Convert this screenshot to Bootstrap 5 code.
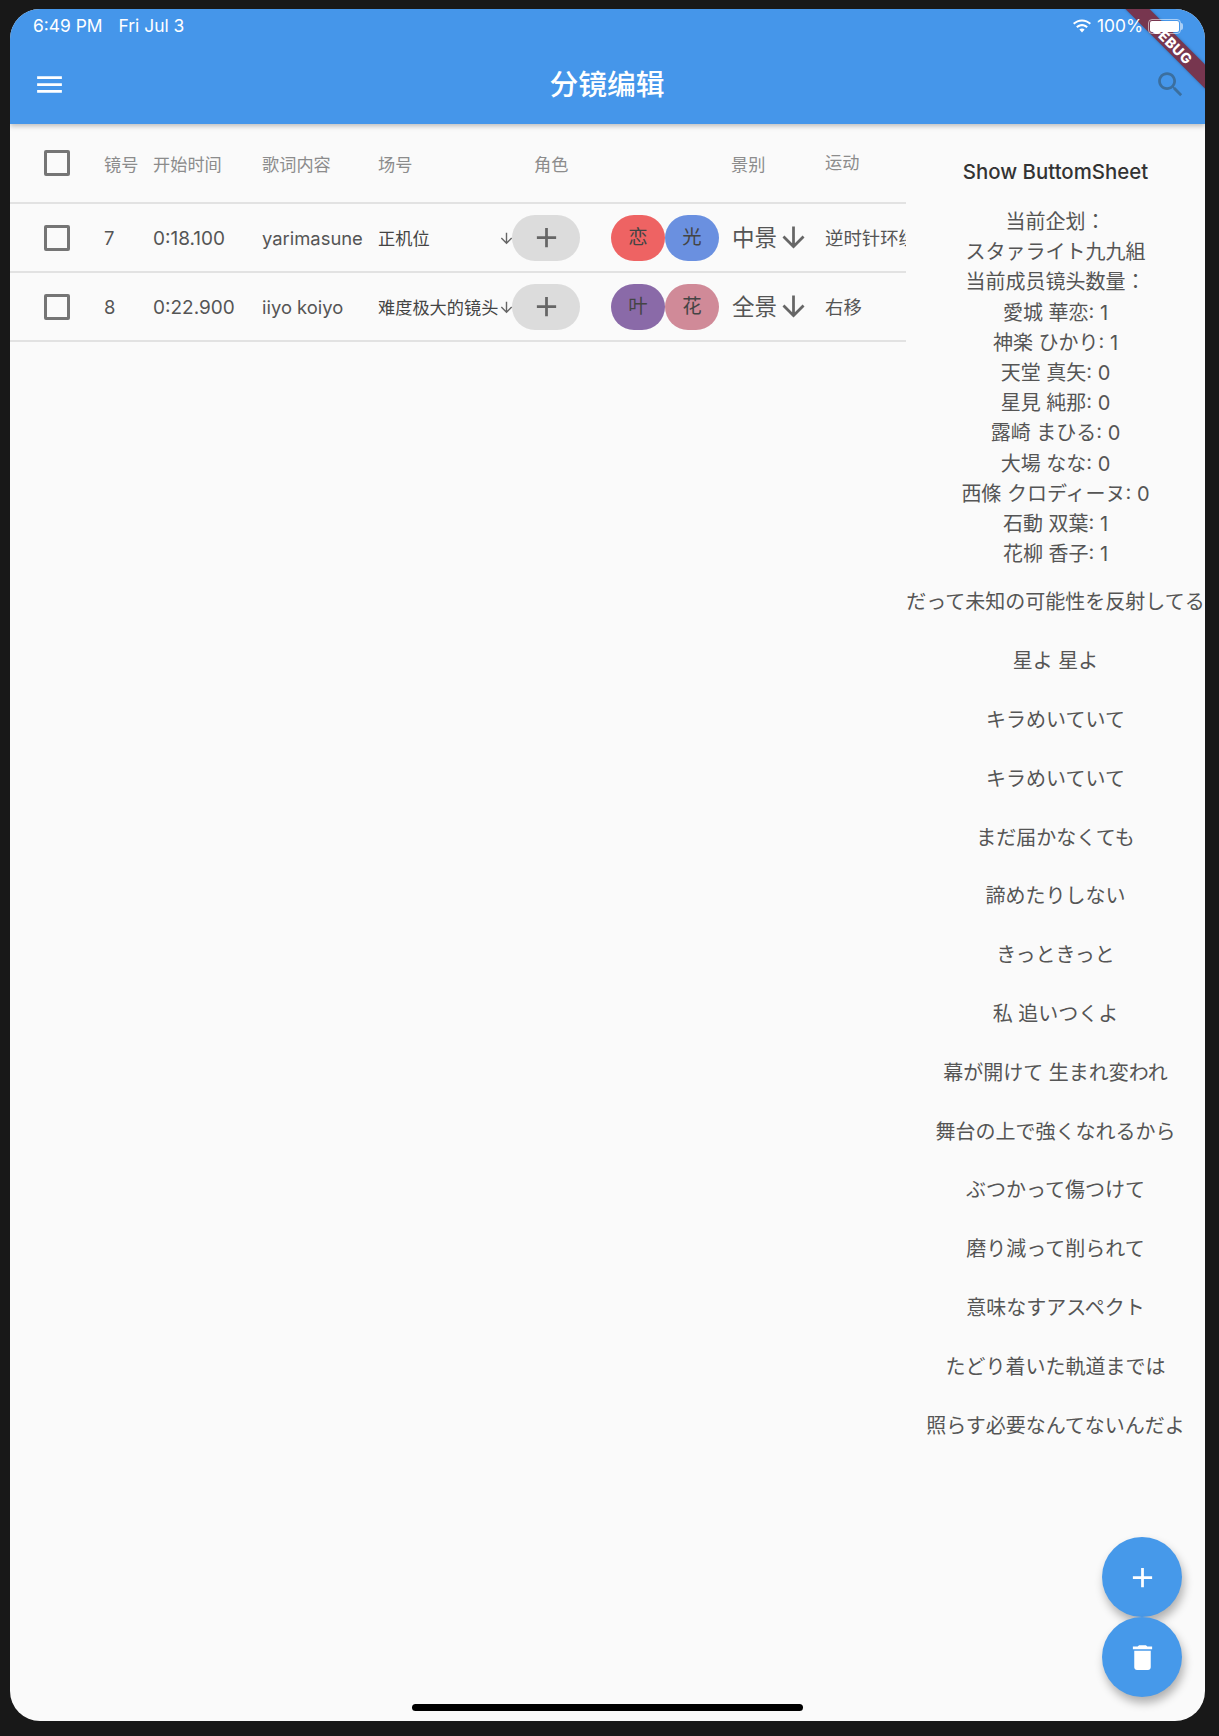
<!DOCTYPE html>
<html lang="zh-CN">
<head>
    <meta charset="UTF-8">
    <meta name="viewport" content="width=device-width, initial-scale=1.0">
    <title>分镜编辑</title>
    <link href="https://cdn.jsdelivr.net/npm/bootstrap@5.3.0/dist/css/bootstrap.min.css" rel="stylesheet">
    <style>
        html, body { height: 1736px; }
        body {
            background: #181818;
            padding: 9px 0 0 10px;
            font-family: Inter, "Noto Sans CJK SC", sans-serif;
            overflow: hidden;
        }
        .screen {
            width: 1195px;
            height: 1712px;
            background: #fafafa;
            border-radius: 30px;
            overflow: hidden;
            position: relative;
            color: #555;
        }
        .app-head {
            background: #4596ea;
            height: 115px;
            color: #fff;
            box-shadow: 0 2px 5px rgba(0,0,0,.25);
            position: relative;
            z-index: 2;
        }
        .status-row {
            height: 35px;
            padding: 0 24px 0 23px;
            font-size: 17.4px;
            position: relative;
            z-index: 3;
        }
        .status-pct { margin-left: 5px; }
        .tool-row { height: 80px; padding: 0 18px 0 23px; }
        .tool-title { font-size: 28.8px; font-weight: 500; margin-right: 6px; padding-top: 2px; }
        .search-ico { fill: #3b6f9f; }
        .debug-ribbon {
            position: absolute;
            left: 1062px;
            top: 26px;
            width: 200px;
            height: 17px;
            line-height: 17px;
            background: #77364f;
            color: #fff;
            font-size: 14px;
            font-weight: 800;
            letter-spacing: .5px;
            text-align: center;
            transform: rotate(45deg);
            box-shadow: 0 0 3px rgba(0,0,0,.3);
        }
        .battery-box {
            width: 33px;
            height: 15px;
            border: 1px solid rgba(255,255,255,.55);
            border-radius: 4px;
            padding: 1px;
            margin-left: 5px;
            position: relative;
        }
        .battery-box::before {
            content: "";
            display: block;
            height: 100%;
            background: #fff;
            border-radius: 2px;
        }
        .battery-box::after {
            content: "";
            position: absolute;
            right: -3px;
            top: 3px;
            width: 2px;
            height: 7px;
            background: rgba(255,255,255,.55);
            border-radius: 0 2px 2px 0;
        }
        .data-pane { width: 896px; overflow: hidden; flex: none; }
        .side-pane { width: 299px; flex: none; text-align: center; font-family: Inter, "Noto Sans CJK JP", sans-serif; font-size: 20px; }
        .tbl-row {
            display: grid;
            grid-template-columns: 94px 49px 109px 116px 134px 99px 108px 106px 81px;
            align-items: center;
            height: 69px;
            border-bottom: 2px solid #e2e2e2;
            white-space: nowrap;
        }
        .tbl-row > .cell-num, .tbl-row > .cell-cn, .tbl-row > .move-cell { padding-top: 3px; }
        .tbl-row.head-row { height: 80px; color: #8c8c8c; font-size: 17.2px; }
        .tbl-row.head-row > div:not(.tick) { padding-top: 3px; }
        .tbl-row.head-row > .lift { padding-top: 0; margin-top: -3px; }
        .tick {
            width: 26px;
            height: 26px;
            border: 3px solid #757575;
            border-radius: 2px;
            margin-left: 34px;
        }
        .cell-num { font-size: 18.4px; }
        .cell-time { font-size: 19px; }
        .cell-cn { font-size: 17.2px; color: #444; }
        .move-cell { font-size: 18.4px; overflow: hidden; }
        .scene-wrap { position: relative; }
        .scene-wrap svg { position: absolute; right: -3px; top: 50%; margin-top: -7px; }
        .add-pill {
            width: 68px;
            height: 46px;
            border-radius: 23px;
            background: #dcdcdc;
            border: 0;
            padding: 0;
        }
        .add-pill svg { fill: #666; }
        .chip-box {
            width: 54px;
            height: 46px;
            border-radius: 23px;
            font-size: 19.4px;
            color: #444;
        }
        .chip-red { background: #ee6363; }
        .chip-blue { background: #6a90e0; }
        .chip-purple { background: #8a6aa8; }
        .chip-pink { background: #d08a98; }
        .shot-cell { padding-left: 13px; font-size: 22.5px; }
        .shot-cell svg { fill: #666; flex: none; }
        .role-head { padding-left: 22px; }
        .shot-head { padding-left: 12px; }
        .sheet-btn { padding-top: 33px; height: 83px; font-size: 20.400px; line-height: 30px; color: #333; font-weight: 500; }
        .sheet-lines { line-height: 30.2px; margin-bottom: 4px; }
        .lyric-line { line-height: 58.8px; white-space: nowrap; }
        .fab-stack { position: absolute; right: 23px; bottom: 24px; z-index: 4; }
        .fab-round {
            width: 80px;
            height: 80px;
            border-radius: 50%;
            background: #4699ea;
            border: 0;
            padding: 0;
            box-shadow: 2px 6px 10px rgba(0,0,0,.3);
        }
        .fab-round svg { fill: #fff; }
        .home-bar {
            position: absolute;
            left: 402px;
            bottom: 10px;
            width: 391px;
            height: 7px;
            border-radius: 4px;
            background: #000;
        }
    </style>
</head>
<body>
    <div class="screen">
        <div class="app-head">
            <div class="debug-ribbon">DEBUG</div>
            <div class="status-row d-flex align-items-center">
                <span>6:49 PM</span>
                <span class="ms-3">Fri Jul 3</span>
                <svg class="ms-auto" width="20" height="15" viewBox="0 0 20 15" fill="#fff">
                    <path d="M10 2.6c2.9 0 5.6 1.1 7.6 3l1.4-1.5C16.6 1.8 13.4.4 10 .4S3.4 1.8 1 4.1l1.4 1.5c2-1.9 4.7-3 7.6-3z"/>
                    <path d="M10 7.2c1.7 0 3.2.6 4.4 1.7l1.5-1.5C14.3 5.9 12.2 5 10 5S5.7 5.9 4.100 7.4l1.5 1.500C6.800 7.800 8.300 7.200 10 7.200z"/>
                    <path d="M10 9.600c-1 0-1.900.4-2.600 1L10 13.600l2.600-3c-.7-.6-1.600-1-2.600-1z"/>
                </svg>
                <span class="status-pct">100%</span>
                <div class="battery-box"></div>
            </div>
            <div class="tool-row d-flex align-items-center justify-content-between">
                <svg width="33" height="33" viewBox="0 0 24 24" fill="#fff"><path d="M3 18h18v-2H3v2zm0-5h18v-2H3v2zm0-7v2h18V6H3z"/></svg>
                <span class="tool-title">分镜编辑</span>
                <svg class="search-ico" width="33" height="33" viewBox="0 0 24 24"><path d="M15.500 14h-.79l-.28-.27C15.410 12.590 16 11.110 16 9.500 16 5.910 13.090 3 9.500 3S3 5.910 3 9.500 5.910 16 9.500 16c1.610 0 3.090-.59 4.230-1.570l.27.28v.79l5 4.990L20.490 19l-4.990-5zm-6 0C7.010 14 5 11.990 5 9.500S7.010 5 9.500 5 14 7.010 14 9.500 11.990 14 9.500 14z"/></svg>
            </div>
        </div>

        <div class="d-flex">
            <div class="data-pane">
                <div class="tbl-row head-row">
                    <div class="tick"></div>
                    <div>镜号</div>
                    <div>开始时间</div>
                    <div>歌词内容</div>
                    <div>场号</div>
                    <div class="role-head">角色</div>
                    <div></div>
                    <div class="shot-head">景别</div>
                    <div class="lift">运动</div>
                </div>
                <div class="tbl-row">
                    <div class="tick"></div>
                    <div class="cell-num">7</div>
                    <div class="cell-num cell-time">0:18.100</div>
                    <div class="cell-num">yarimasune</div>
                    <div class="cell-cn scene-wrap">正机位
                        <svg width="17" height="17" viewBox="0 0 24 24" fill="#666"><path d="M20 12l-1.410-1.410L13 16.170V4h-2v12.170l-5.580-5.600L4 12l8 8 8-8z"/></svg>
                    </div>
                    <div><button class="add-pill d-flex align-items-center justify-content-center"><svg width="33" height="33" viewBox="0 0 24 24"><path d="M19 13h-6v6h-2v-6H5v-2h6V5h2v6h6v2z"/></svg></button></div>
                    <div class="d-flex">
                        <div class="chip-box chip-red d-flex align-items-center justify-content-center">恋</div>
                        <div class="chip-box chip-blue d-flex align-items-center justify-content-center">光</div>
                    </div>
                    <div class="shot-cell d-flex align-items-center">中景<svg width="33" height="33" viewBox="0 0 24 24"><path d="M20 12l-1.410-1.410L13 16.170V4h-2v12.170l-5.580-5.600L4 12l8 8 8-8z"/></svg></div>
                    <div class="move-cell">逆时针环绕</div>
                </div>
                <div class="tbl-row">
                    <div class="tick"></div>
                    <div class="cell-num">8</div>
                    <div class="cell-num cell-time">0:22.900</div>
                    <div class="cell-num">iiyo koiyo</div>
                    <div class="cell-cn scene-wrap">难度极大的镜头
                        <svg width="17" height="17" viewBox="0 0 24 24" fill="#666"><path d="M20 12l-1.410-1.410L13 16.170V4h-2v12.170l-5.580-5.600L4 12l8 8 8-8z"/></svg>
                    </div>
                    <div><button class="add-pill d-flex align-items-center justify-content-center"><svg width="33" height="33" viewBox="0 0 24 24"><path d="M19 13h-6v6h-2v-6H5v-2h6V5h2v6h6v2z"/></svg></button></div>
                    <div class="d-flex">
                        <div class="chip-box chip-purple d-flex align-items-center justify-content-center">叶</div>
                        <div class="chip-box chip-pink d-flex align-items-center justify-content-center">花</div>
                    </div>
                    <div class="shot-cell d-flex align-items-center">全景<svg width="33" height="33" viewBox="0 0 24 24"><path d="M20 12l-1.410-1.410L13 16.170V4h-2v12.170l-5.580-5.600L4 12l8 8 8-8z"/></svg></div>
                    <div class="move-cell">右移</div>
                </div>
            </div>

            <div class="side-pane" lang="ja">
                <div class="sheet-btn">Show ButtomSheet</div>
                <div class="sheet-lines">
                    <div>当前企划：</div>
                    <div>スタァライト九九組</div>
                    <div>当前成员镜头数量：</div>
                    <div>愛城 華恋: 1</div>
                    <div>神楽 ひかり: 1</div>
                    <div>天堂 真矢: 0</div>
                    <div>星見 純那: 0</div>
                    <div>露崎 まひる: 0</div>
                    <div>大場 なな: 0</div>
                    <div>西條 クロディーヌ: 0</div>
                    <div>石動 双葉: 1</div>
                    <div>花柳 香子: 1</div>
                </div>
                <div class="lyric-line">だって未知の可能性を反射してる</div>
                <div class="lyric-line">星よ 星よ</div>
                <div class="lyric-line">キラめいていて</div>
                <div class="lyric-line">キラめいていて</div>
                <div class="lyric-line">まだ届かなくても</div>
                <div class="lyric-line">諦めたりしない</div>
                <div class="lyric-line">きっときっと</div>
                <div class="lyric-line">私 追いつくよ</div>
                <div class="lyric-line">幕が開けて 生まれ変われ</div>
                <div class="lyric-line">舞台の上で強くなれるから</div>
                <div class="lyric-line">ぶつかって傷つけて</div>
                <div class="lyric-line">磨り減って削られて</div>
                <div class="lyric-line">意味なすアスペクト</div>
                <div class="lyric-line">たどり着いた軌道までは</div>
                <div class="lyric-line">照らす必要なんてないんだよ</div>
            </div>
        </div>

        <div class="fab-stack d-flex flex-column">
            <button class="fab-round d-flex align-items-center justify-content-center"><svg width="33" height="33" viewBox="0 0 24 24"><path d="M19 13h-6v6h-2v-6H5v-2h6V5h2v6h6v2z"/></svg></button>
            <button class="fab-round d-flex align-items-center justify-content-center"><svg width="33" height="33" viewBox="0 0 24 24"><path d="M6 19c0 1.100.9 2 2 2h8c1.100 0 2-.9 2-2V7H6v12zM19 4h-3.500l-1-1h-5l-1 1H5v2h14V4z"/></svg></button>
        </div>
        <div class="home-bar"></div>
    </div>
    <script src="https://cdn.jsdelivr.net/npm/bootstrap@5.3.0/dist/js/bootstrap.bundle.min.js"></script>
</body>
</html>
